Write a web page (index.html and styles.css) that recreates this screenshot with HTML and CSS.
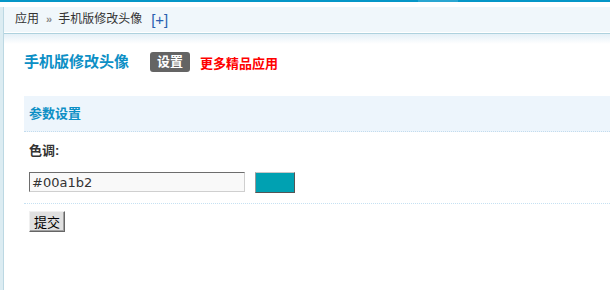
FILE: index.html
```html
<!DOCTYPE html>
<html lang="zh-CN">
<head>
<meta charset="utf-8">
<title>手机版修改头像</title>
<link rel="stylesheet" href="styles.css">
</head>
<body>
<div class="topbar"><span class="topbar-tab"></span></div>
<div class="topgap"></div>
<div class="page">
  <div class="sidestrip"></div>
  <div class="main">
    <div class="crumb">
      <span>应用</span><span class="sep">»</span><span>手机版修改头像</span><a class="plus">[+]</a>
    </div>
    <div class="crumb-line"></div>
    <div class="crumb-shade"></div>
    <div class="content">
      <div class="title-row">
        <h1 class="title">手机版修改头像</h1>
        <span class="badge">设置</span>
        <a class="more">更多精品应用</a>
      </div>
      <div class="section-head">参数设置</div>
      <div class="form">
        <div class="label">色调:</div>
        <div class="field-row">
          <input class="text-input" type="text" value="#00a1b2">
          <span class="swatch"></span>
        </div>
        <div class="submit-row">
          <button class="btn" type="button">提交</button>
        </div>
      </div>
    </div>
  </div>
</div>
</body>
</html>
```
FILE: styles.css
```css
html, body {
  margin: 0;
  padding: 0;
  background: #fff;
}
body {
  font-family: "Liberation Sans", "Noto Sans CJK SC", sans-serif;
  font-size: 12px;
  color: #333;
  height: 290px;
  overflow: hidden;
}
.topbar {
  height: 2px;
  background: #0596c7;
  display: flex;
}
.topbar-tab {
  margin-left: 418px;
  width: 40px;
  background: #2aa6d1;
}
.topgap {
  height: 5px;
}
.page {
  display: flex;
  height: 283px;
}
.sidestrip {
  width: 3px;
  background: #dcecf2;
  border-right: 1px solid #bcd8e3;
}
.main {
  flex: 1;
  min-width: 0;
}
.crumb {
  height: 25px;
  line-height: 25px;
  background: #f0f7fb;
  padding-left: 11px;
  display: flex;
  align-items: center;
  color: #333;
  font-size: 12px;
}
.sep {
  color: #888;
  margin: 0 6px 0 7px;
  font-size: 11px;
  font-weight: bold;
}
.plus {
  margin-left: 9px;
  color: #2a5fb0;
  font-size: 15px;
}
.crumb-line {
  height: 1px;
  margin-top: 1px;
  background: #aed2de;
}
.crumb-shade {
  height: 10px;
  background: linear-gradient(#e4f0f7, #ffffff);
}
.content {
  padding-left: 20px;
}
.title-row {
  display: flex;
  align-items: center;
  height: 20px;
  margin-top: 8px;
}
.title {
  margin: 0;
  font-size: 15px;
  font-weight: bold;
  color: #0c8fc5;
  line-height: 20px;
}
.badge {
  margin-left: 21px;
  width: 40px;
  height: 20px;
  line-height: 20px;
  text-align: center;
  background: #646464;
  color: #fff;
  font-weight: bold;
  font-size: 13px;
  border-radius: 3px;
}
.more {
  margin-left: 10px;
  color: #f00;
  font-weight: bold;
  font-size: 13px;
}
.section-head {
  margin-top: 24px;
  height: 35px;
  line-height: 35px;
  padding-left: 5px;
  background: #edf5fc;
  border-bottom: 1px dotted #c3dcee;
  color: #0c8fc5;
  font-weight: bold;
  font-size: 13px;
}
.form {
  padding-left: 5px;
}
.label {
  margin-top: 12px;
  line-height: 14px;
  font-weight: bold;
  font-size: 13px;
  color: #333;
}
.field-row {
  display: flex;
  align-items: flex-start;
  margin-top: 14px;
  margin-left: -5px;
  padding-left: 5px;
  padding-bottom: 10px;
  border-bottom: 1px dotted #c6e1f2;
}
.text-input {
  box-sizing: border-box;
  width: 216px;
  height: 20px;
  margin: 0;
  padding: 0 2px;
  border: 1px solid;
  border-color: #6d6d6d #cfcfcf #cfcfcf #6d6d6d;
  background: #f9f9f9;
  font-family: "DejaVu Sans", sans-serif;
  font-size: 13px;
  color: #333;
  outline: none;
}
.swatch {
  box-sizing: border-box;
  width: 40px;
  height: 21px;
  margin-left: 10px;
  background: #00a1b2;
  border: 1px solid;
  border-color: #c8c8c8 #555 #555 #999;
}
.submit-row {
  margin-top: 7px;
}
.btn {
  box-sizing: border-box;
  width: 36px;
  height: 21px;
  margin: 0;
  padding: 0;
  background: #e0e0e0;
  border: 1px solid;
  border-color: #f0f0f0 #666 #666 #f0f0f0;
  box-shadow: inset -1px -1px 0 #a0a0a0;
  font-family: "Noto Sans CJK SC", sans-serif;
  font-size: 13px;
  color: #000;
  line-height: 19px;
}
```
